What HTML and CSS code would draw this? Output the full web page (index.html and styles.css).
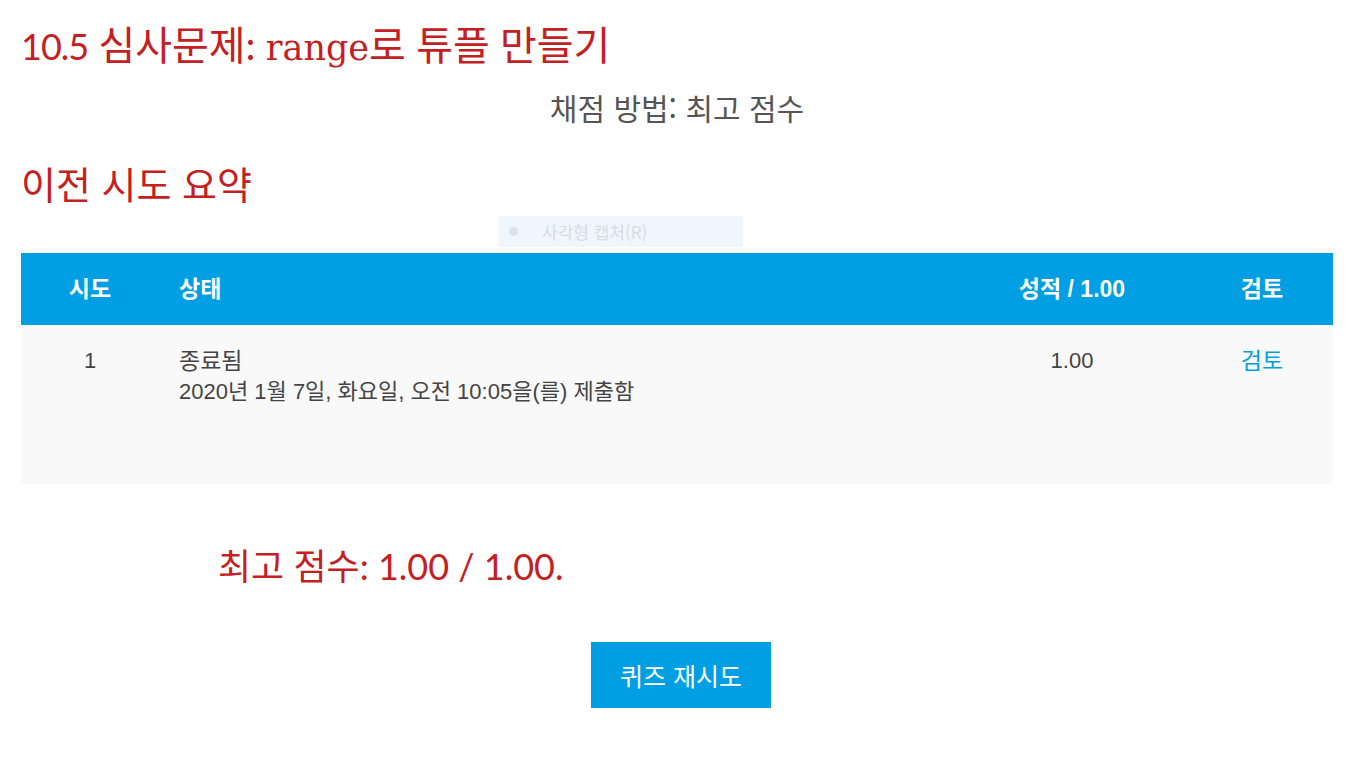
FILE: index.html
```html
<!DOCTYPE html>
<html lang="ko">
<head>
<meta charset="utf-8">
<title>10.5 심사문제: range로 튜플 만들기</title>
<link rel="stylesheet" href="styles.css">
</head>
<body>
<div class="page">
  <h2 class="title"><span class="num">10.5</span> 심사문제: <span class="slab">range</span>로 튜플 만들기</h2>
  <p class="method">채점 방법: 최고 점수</p>
  <h3 class="summary">이전 시도 요약</h3>
  <div class="capture"><span class="dot"></span><span>사각형 캡처(R)</span></div>
  <div class="table">
    <div class="row head">
      <div class="cell c">시도</div>
      <div class="cell l">상태</div>
      <div class="cell c">성적 / 1.00</div>
      <div class="cell c">검토</div>
    </div>
    <div class="row body">
      <div class="cell c">1</div>
      <div class="cell l">
        <div class="state">종료됨</div>
        <div class="date">2020년 1월 7일, 화요일, 오전 10:05을(를) 제출함</div>
      </div>
      <div class="cell c">1.00</div>
      <div class="cell c"><a class="link" href="#">검토</a></div>
    </div>
  </div>
  <h3 class="best">최고 점수: 1.00 / 1.00.</h3>
  <div class="actions"><button class="btn">퀴즈 재시도</button></div>
</div>
</body>
</html>
```

FILE: styles.css
```css
* { box-sizing: border-box; }
html, body { margin: 0; padding: 0; background: #fff; }
body {
  font-family: "Liberation Sans", "Noto Sans CJK KR", sans-serif;
  color: #444;
}
.page {
  padding: 20px 20px 0 21px;
  position: relative;
}
.title {
  margin: 0;
  font-family: Lato, "Noto Sans CJK KR", sans-serif;
  font-weight: 400;
  font-size: 40px;
  line-height: 50px;
  color: #c4201f;
}
.title .num {
  font-size: 36px;
  letter-spacing: -1px;
}
.slab {
  font-family: "DejaVu Serif", serif;
  font-size: 35px;
}
.method {
  margin: 14px 0 0;
  text-align: center;
  font-family: "Noto Sans CJK KR", sans-serif;
  font-size: 30px;
  line-height: 40px;
  color: #555;
}
.summary {
  margin: 31px 0 0;
  font-family: "Noto Sans CJK KR", sans-serif;
  font-weight: 400;
  font-size: 38px;
  line-height: 50px;
  color: #c4201f;
}
.capture {
  position: absolute;
  left: 499px;
  top: 216px;
  width: 244px;
  height: 31px;
  background: #eff6fd;
  display: flex;
  align-items: center;
  gap: 24px;
  padding-left: 10px;
  font-family: "Noto Sans CJK KR", sans-serif;
  font-size: 17px;
  color: #d6dde4;
}
.capture .dot {
  width: 9px;
  height: 9px;
  border-radius: 50%;
  background: #dde2e6;
}
.table {
  margin-top: 45px;
  width: 1312px;
}
.row {
  display: grid;
  grid-template-columns: 138px 1fr 238px 142px;
}
.head {
  background: #009fe3;
  height: 72px;
  padding-bottom: 4px;
  align-items: center;
  color: #fff;
  font-weight: 700;
  font-size: 23px;
}
.body {
  background: #f9f9f9;
  height: 159px;
  align-items: start;
  padding-top: 21px;
  font-size: 22px;
  color: #444;
}
.cell.c { text-align: center; }
.cell.l { padding-left: 20px; }
.body .cell { line-height: 30px; }
.state { font-size: 23px; line-height: 30px; }
.date {
  margin-top: 3px;
  font-size: 22px;
  line-height: 26px;
}
.link { color: #009fe3; text-decoration: none; font-size: 23px; }
.best {
  margin: 57px 0 0 197px;
  font-family: Lato, "Noto Sans CJK KR", sans-serif;
  font-weight: 400;
  font-size: 36px;
  line-height: 50px;
  color: #c4201f;
}
.actions {
  margin-top: 51px;
  padding-left: 8px;
  display: flex;
  justify-content: center;
}
.btn {
  width: 180px;
  height: 66px;
  border: 0;
  background: #009fe3;
  color: #fff;
  font-family: "Liberation Sans", "Noto Sans CJK KR", sans-serif;
  font-size: 25px;
  padding: 0;
}
```
